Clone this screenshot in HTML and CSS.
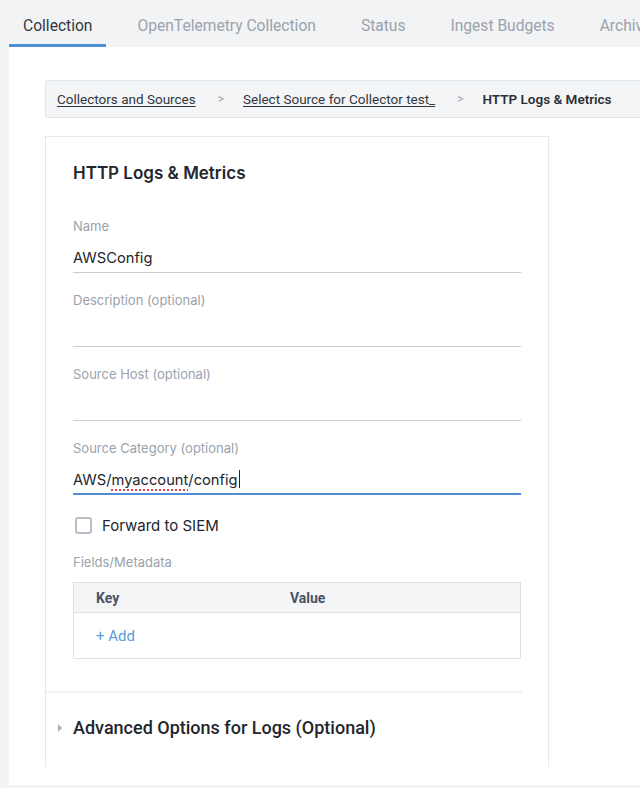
FILE: index.html
```html
<!DOCTYPE html>
<html lang="en">
<head>
  <meta charset="UTF-8">
  <meta name="viewport" content="width=device-width, initial-scale=1.0">
  <title>HTTP Logs & Metrics</title>
  <link rel="stylesheet" href="styles.css">
</head>
<body>
  <nav class="tabs">
    <a class="tab active">Collection</a>
    <a class="tab">OpenTelemetry Collection</a>
    <a class="tab">Status</a>
    <a class="tab">Ingest Budgets</a>
    <a class="tab">Archive</a>
  </nav>

  <main class="panel">
    <div class="breadcrumb">
      <a class="crumb-link">Collectors and Sources</a>
      <span class="crumb-sep">&gt;</span>
      <a class="crumb-link">Select Source for Collector test_</a>
      <span class="crumb-sep">&gt;</span>
      <span class="crumb-current">HTTP Logs &amp; Metrics</span>
    </div>

    <section class="card">
      <h1 class="card-title">HTTP Logs &amp; Metrics</h1>

      <div class="field">
        <label class="field-label">Name</label>
        <div class="field-input">AWSConfig</div>
      </div>

      <div class="field">
        <label class="field-label">Description (optional)</label>
        <div class="field-input"></div>
      </div>

      <div class="field">
        <label class="field-label">Source Host (optional)</label>
        <div class="field-input"></div>
      </div>

      <div class="field">
        <label class="field-label">Source Category (optional)</label>
        <div class="field-input focused">AWS/<span class="misspelled">myaccount</span>/config<span class="caret"></span></div>
      </div>

      <label class="checkbox-row">
        <span class="checkbox"></span>
        Forward to SIEM
      </label>

      <div class="field-label meta-label">Fields/Metadata</div>
      <div class="meta-table">
        <div class="meta-head">
          <span class="col-key">Key</span>
          <span class="col-value">Value</span>
        </div>
        <div class="meta-body">
          <a class="add-link">+ Add</a>
        </div>
      </div>

      <div class="advanced">
        <span class="arrow"></span>
        <span class="advanced-title">Advanced Options for Logs (Optional)</span>
      </div>
    </section>
  </main>
</body>
</html>
```

FILE: styles.css
```css
* {
  margin: 0;
  padding: 0;
  box-sizing: border-box;
}

body {
  font-family: Roboto, 'Liberation Sans', sans-serif;
  background: #f2f3f5;
  color: #2b2f36;
  height: 788px;
  overflow: hidden;
  padding-left: 9px;
}

/* tabs */
.tabs {
  display: flex;
  height: 47px;
  white-space: nowrap;
  overflow: hidden;
}

.tab {
  display: flex;
  align-items: center;
  padding: 8px 14px 0;
  margin-right: 17px;
  font-size: 15.6px;
  color: #9aa2ac;
  border-bottom: 3px solid transparent;
}

.tab.active {
  color: #33373d;
  border-bottom-color: #4f8fd3;
}

/* white panel */
.panel {
  background: #fff;
  height: 738px;
  padding: 33px 0 0 36px;
}

.breadcrumb {
  display: flex;
  align-items: center;
  height: 38px;
  background: #f4f5f7;
  border: 1px solid #e2e5e9;
  border-right: none;
  border-radius: 3px 0 0 3px;
  padding-left: 11px;
  font-size: 13.5px;
  white-space: nowrap;
  overflow: hidden;
}

.crumb-link {
  color: #33373d;
  text-decoration: underline;
  text-underline-offset: 2px;
}

.crumb-sep {
  color: #9aa2ac;
  font-size: 12px;
  margin: 0 19px 0 22px;
}

.crumb-current {
  font-weight: 600;
  color: #2b2f36;
}

/* form card */
.card {
  width: 504px;
  height: 631px;
  margin-top: 18px;
  border: 1px solid #e6e8eb;
  border-bottom: none;
  padding: 25px 27px 0 27px;
  font-family: Inter, 'Liberation Sans', sans-serif;
}

.card-title {
  font-size: 17px;
  line-height: 22px;
  font-weight: 600;
  color: #23262b;
  margin-bottom: 34px;
}

.field {
  margin-bottom: 19px;
}

.field-label {
  display: block;
  font-size: 13px;
  line-height: 16px;
  color: #9aa2ad;
}

.field-input {
  height: 39px;
  padding-top: 9px;
  font-size: 14.7px;
  line-height: 30px;
  color: #23262b;
  border-bottom: 1px solid #c9cdd3;
  white-space: nowrap;
}

.field-input.focused {
  border-bottom: 2px solid #4f8fd3;
}

.misspelled {
  text-decoration: underline dotted #e0484e;
  text-decoration-thickness: 2px;
  text-underline-offset: 4px;
}

.caret {
  display: inline-block;
  width: 1px;
  height: 18px;
  background: #23262b;
  vertical-align: -3px;
  margin-left: 1px;
}

.checkbox-row {
  display: flex;
  align-items: center;
  height: 22px;
  font-size: 15px;
  color: #23262b;
  padding-left: 2px;
}

.checkbox {
  width: 17px;
  height: 17px;
  border: 2px solid #b9bec6;
  border-radius: 3px;
  margin-right: 10px;
}

.meta-label {
  margin-top: 18px;
}

.meta-table {
  margin-top: 12px;
  border: 1px solid #dde0e4;
  font-family: Roboto, 'Liberation Sans', sans-serif;
}

.meta-head {
  display: flex;
  align-items: center;
  height: 30px;
  background: #f4f5f7;
  border-bottom: 1px solid #dde0e4;
  padding-left: 22px;
  font-size: 14px;
  font-weight: 700;
  color: #4a5264;
}

.col-key {
  width: 194px;
}

.meta-body {
  display: flex;
  align-items: center;
  height: 45px;
  padding-left: 22px;
}

.add-link {
  font-size: 15px;
  color: #5a9dd8;
}

.advanced {
  display: flex;
  align-items: center;
  margin: 32px 0 0 -27px;
  width: 476px;
  border-top: 2px solid #f1f2f4;
  padding-top: 24px;
  padding-left: 12px;
  font-family: Roboto, 'Liberation Sans', sans-serif;
}

.arrow {
  width: 0;
  height: 0;
  border-top: 4px solid transparent;
  border-bottom: 4px solid transparent;
  border-left: 4px solid #a6adb7;
  margin-right: 11px;
}

.advanced-title {
  font-size: 18px;
  line-height: 22px;
  font-weight: 500;
  color: #23262b;
}
```
